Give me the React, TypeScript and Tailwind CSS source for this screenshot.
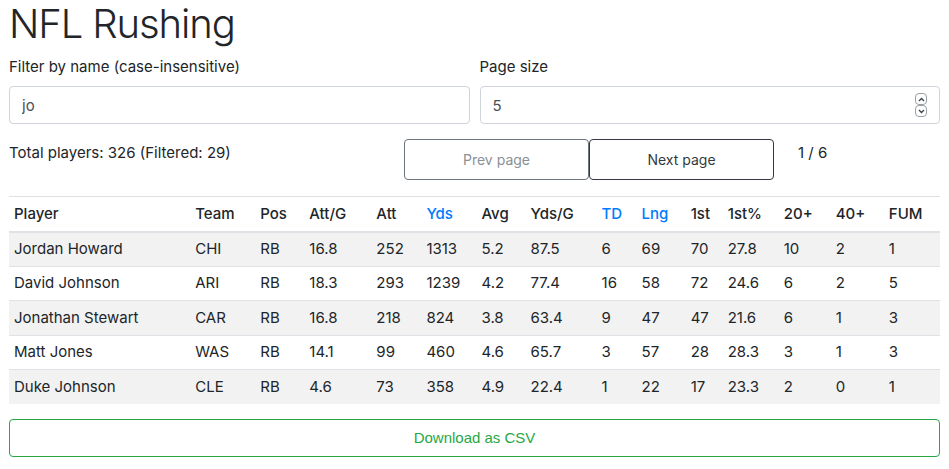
import React from 'react';

type Row = {
  player: string;
  team: string;
  pos: string;
  attG: string;
  att: string;
  yds: string;
  avg: string;
  ydsG: string;
  td: string;
  lng: string;
  first: string;
  firstPct: string;
  twenty: string;
  forty: string;
  fum: string;
};

const rows: Row[] = [
  { player: 'Jordan Howard', team: 'CHI', pos: 'RB', attG: '16.8', att: '252', yds: '1313', avg: '5.2', ydsG: '87.5', td: '6', lng: '69', first: '70', firstPct: '27.8', twenty: '10', forty: '2', fum: '1' },
  { player: 'David Johnson', team: 'ARI', pos: 'RB', attG: '18.3', att: '293', yds: '1239', avg: '4.2', ydsG: '77.4', td: '16', lng: '58', first: '72', firstPct: '24.6', twenty: '6', forty: '2', fum: '5' },
  { player: 'Jonathan Stewart', team: 'CAR', pos: 'RB', attG: '16.8', att: '218', yds: '824', avg: '3.8', ydsG: '63.4', td: '9', lng: '47', first: '47', firstPct: '21.6', twenty: '6', forty: '1', fum: '3' },
  { player: 'Matt Jones', team: 'WAS', pos: 'RB', attG: '14.1', att: '99', yds: '460', avg: '4.6', ydsG: '65.7', td: '3', lng: '57', first: '28', firstPct: '28.3', twenty: '3', forty: '1', fum: '3' },
  { player: 'Duke Johnson', team: 'CLE', pos: 'RB', attG: '4.6', att: '73', yds: '358', avg: '4.9', ydsG: '22.4', td: '1', lng: '22', first: '17', firstPct: '23.3', twenty: '2', forty: '0', fum: '1' },
];

// header label, sortable flag, column width
const columns: { label: string; sortable?: boolean; width: number }[] = [
  { label: 'Player', width: 181 },
  { label: 'Team', width: 65 },
  { label: 'Pos', width: 49 },
  { label: 'Att/G', width: 67 },
  { label: 'Att', width: 50 },
  { label: 'Yds', sortable: true, width: 55 },
  { label: 'Avg', width: 49 },
  { label: 'Yds/G', width: 71 },
  { label: 'TD', sortable: true, width: 40 },
  { label: 'Lng', sortable: true, width: 49 },
  { label: '1st', width: 37 },
  { label: '1st%', width: 56 },
  { label: '20+', width: 52 },
  { label: '40+', width: 53 },
  { label: 'FUM', width: 56 },
];

// little stacked up/down stepper drawn over the page size input
const Stepper = () => (
  <div className="absolute right-[13px] top-[7px] flex flex-col">
    <div className="flex h-[12px] w-[12px] items-center justify-center rounded-[4px] border border-[#9aa0a6]">
      <svg width="7" height="5" viewBox="0 0 7 5" fill="none">
        <path d="M1 4L3.5 1.5L6 4" stroke="#3c4043" strokeWidth="1.3" />
      </svg>
    </div>
    <div className="flex h-[12px] w-[12px] items-center justify-center rounded-[4px] border border-[#9aa0a6]">
      <svg width="7" height="5" viewBox="0 0 7 5" fill="none">
        <path d="M1 1L3.5 3.5L6 1" stroke="#3c4043" strokeWidth="1.3" />
      </svg>
    </div>
  </div>
);

const App = () => {
  const cells = (r: Row) => [
    r.player, r.team, r.pos, r.attG, r.att, r.yds, r.avg, r.ydsG,
    r.td, r.lng, r.first, r.firstPct, r.twenty, r.forty, r.fum,
  ];

  return (
    <div className="min-h-screen bg-white px-[9px] text-[#212529] font-['Inter',sans-serif] text-[15px]">
      {/* Title */}
      <h1 className="text-[40px] leading-[48px] font-light tracking-[-1.1px]">NFL Rushing</h1>

      {/* Filters */}
      <div className="grid grid-cols-2 gap-[10px] mt-[8px]">
        <div className="flex flex-col">
          <label className="leading-[22px]">Filter by name (case-insensitive)</label>
          <input
            type="text"
            defaultValue="jo"
            className="mt-[8px] h-[38px] w-full rounded-[4px] border border-[#ced4da] px-[12px] text-[15px] text-[#495057] outline-none"
          />
        </div>
        <div className="flex flex-col">
          <label className="leading-[22px]">Page size</label>
          <div className="relative mt-[8px]">
            <input
              type="number"
              defaultValue={5}
              className="h-[38px] w-full rounded-[4px] border border-[#ced4da] px-[12px] text-[15px] text-[#495057] outline-none [appearance:textfield] [&::-webkit-inner-spin-button]:appearance-none [&::-webkit-outer-spin-button]:appearance-none"
            />
            <Stepper />
          </div>
        </div>
      </div>

      {/* Totals + pagination */}
      <div className="flex items-start mt-[15px]">
        <div className="w-[395px] leading-[28px]">Total players: 326 (Filtered: 29)</div>
        <button className="h-[41px] w-[185px] rounded-[4px] border border-[#6c757d] text-[#8a9096] text-[14px]">
          Prev page
        </button>
        <button className="h-[41px] w-[185px] rounded-[4px] border border-[#343a40] text-[#343a40] text-[14px]">
          Next page
        </button>
        <div className="ml-[24px] leading-[28px]">1 / 6</div>
      </div>

      {/* Table */}
      <table className="mt-[16px] w-full table-fixed border-collapse">
        <colgroup>
          {columns.map((c) => (
            <col key={c.label} style={{ width: c.width }} />
          ))}
        </colgroup>
        <thead>
          <tr className="border-t border-[#dee2e6] border-b-2 border-b-[#dee2e6]">
            {columns.map((c) => (
              <th
                key={c.label}
                className={`h-[35px] px-[5px] text-left font-medium ${c.sortable ? 'text-[#007bff]' : ''}`}
              >
                {c.label}
              </th>
            ))}
          </tr>
        </thead>
        <tbody>
          {rows.map((r, i) => (
            <tr key={r.player} className={`border-t border-[#dee2e6] ${i % 2 === 0 ? 'bg-[#f2f2f2]' : ''}`}>
              {cells(r).map((v, j) => (
                <td key={j} className="h-[34.6px] px-[5px] whitespace-nowrap">
                  {v}
                </td>
              ))}
            </tr>
          ))}
        </tbody>
      </table>

      {/* Export */}
      <button className="mt-[15px] h-[38px] w-full rounded-[4px] border border-[#28a745] text-[#28a745] text-[15px] font-['Liberation_Sans',sans-serif]">
        Download as CSV
      </button>
    </div>
  );
};

export default App;
